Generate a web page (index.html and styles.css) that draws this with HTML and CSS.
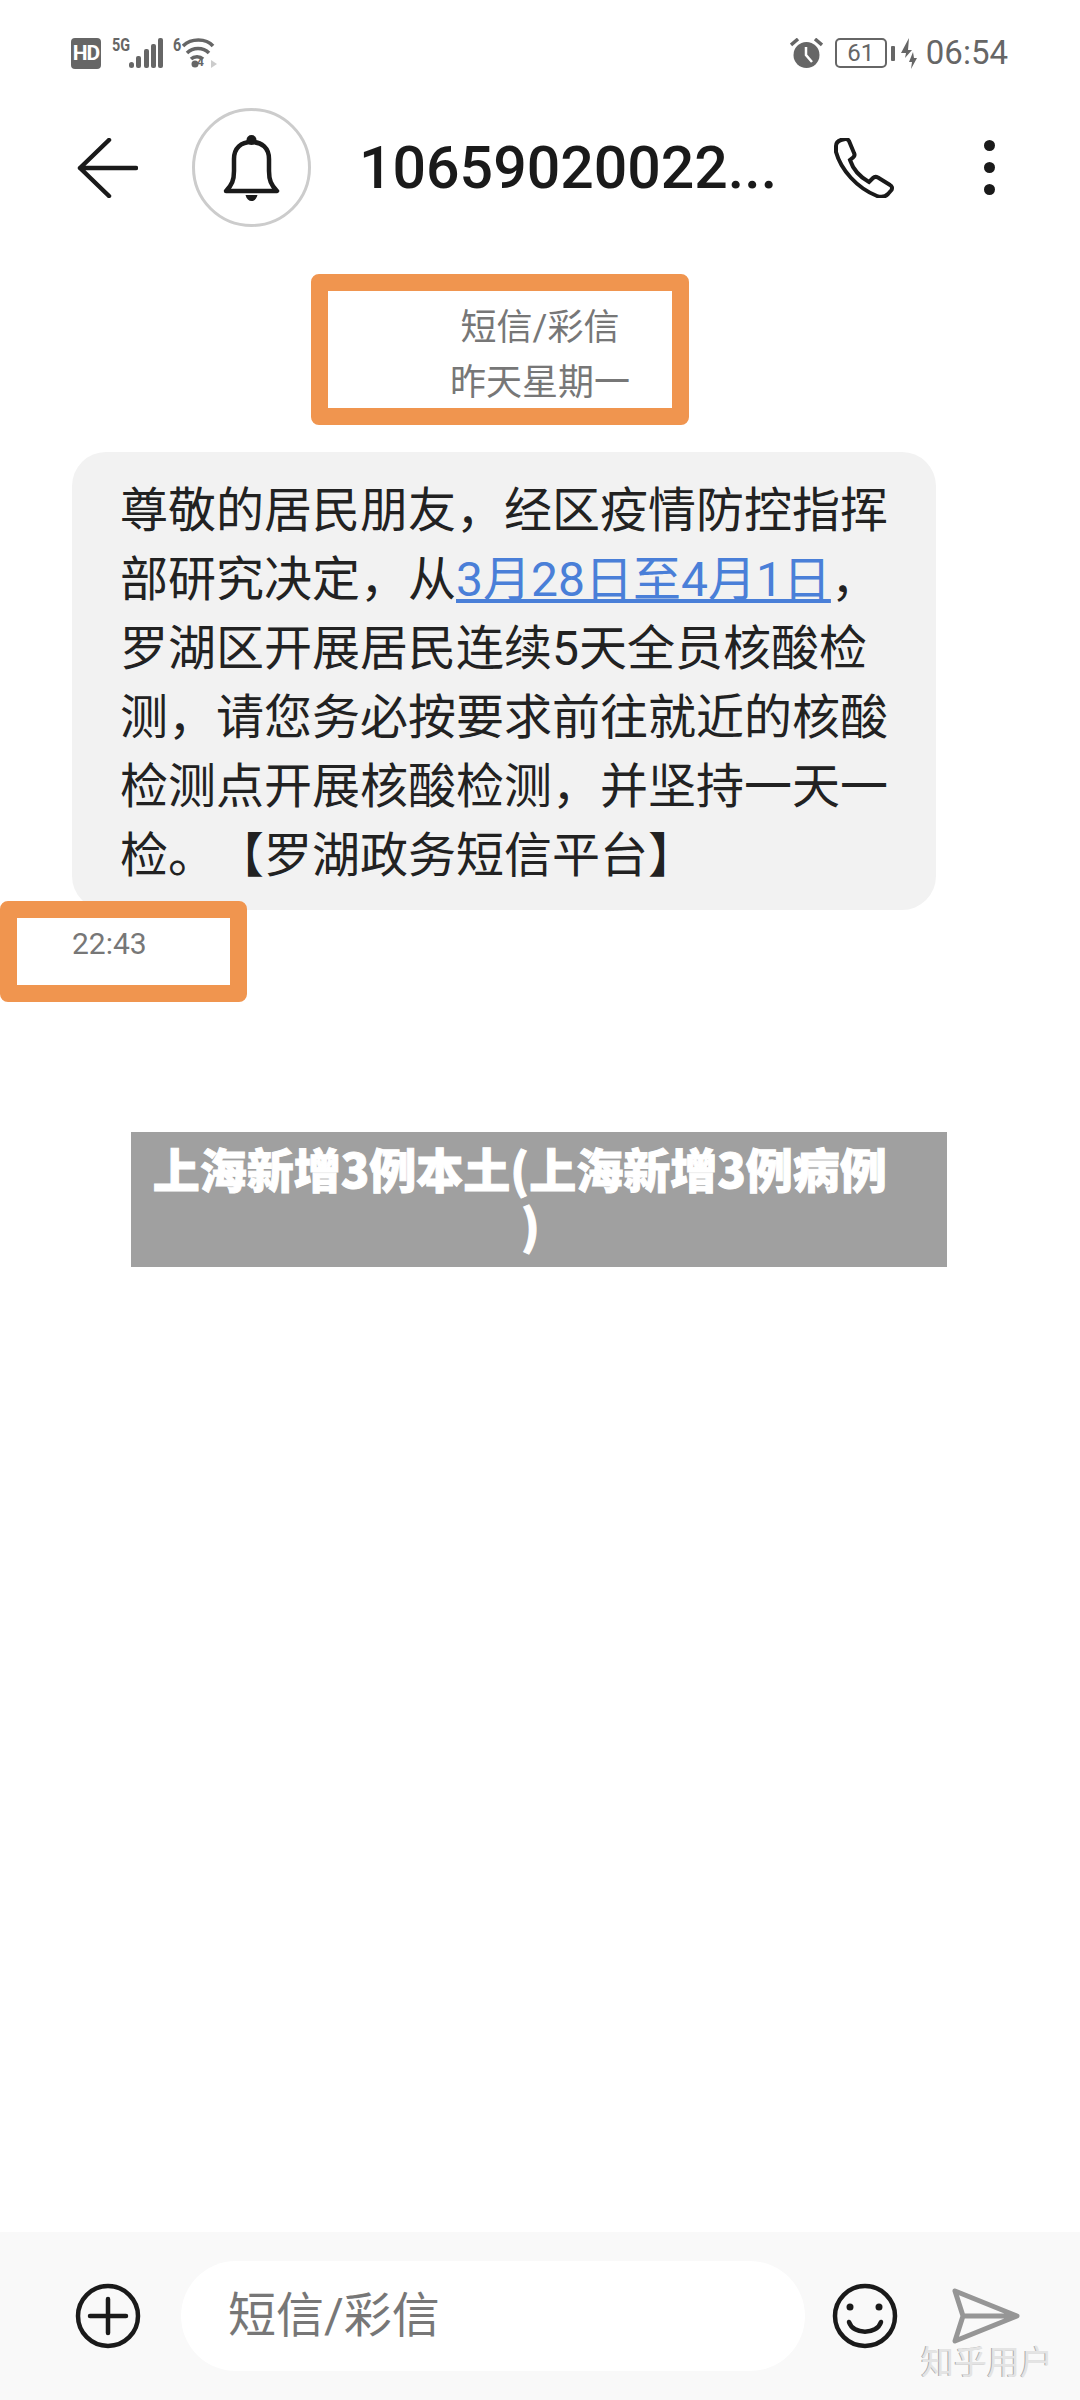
FILE: index.html
```html
<!DOCTYPE html>
<html lang="zh-CN">
<head>
  <meta charset="UTF-8">
  <meta name="viewport" content="width=device-width, initial-scale=1.0">
  <title>短信/彩信</title>
  <link rel="stylesheet" href="styles.css">
</head>
<body>
  <div class="screen">
    <div class="status">
      <div class="status-group">
        <span class="hd">HD</span>
        <span class="net net-5g">5G</span>
        <svg class="signal" width="34" height="30" viewBox="0 0 34 30">
          <rect x="0" y="24" width="5" height="6" rx="2.5"/>
          <rect x="7" y="18" width="5" height="12" rx="2"/>
          <rect x="15" y="11" width="5" height="19" rx="2"/>
          <rect x="22" y="6" width="5" height="24" rx="2"/>
          <rect x="29" y="0" width="5" height="30" rx="2"/>
        </svg>
        <span class="net net-6">6</span>
        <svg class="wifi" width="36" height="30" viewBox="0 0 36 30">
          <path d="M1 8 C9 0 24 0 31 8" />
          <path d="M5 15 C11 9 21 9 27 15" />
          <path d="M9 21 C12 18 18 18 21 21" />
          <circle cx="13" cy="26" r="3.5" class="fill"/>
          <path d="M29 22 L35 26 L29 30 Z" class="arrow"/>
        </svg>
        <span class="wifi-num">4</span>
      </div>
      <div class="status-group">
        <svg class="alarm" width="33" height="30" viewBox="0 0 33 30">
          <circle cx="16.5" cy="17" r="13" fill="#666"/>
          <path d="M16 9 V17 L22 24" fill="none" stroke="#fff" stroke-width="2.5"/>
          <path d="M1 7 L8 1 M32 7 L25 1" fill="none" stroke="#666" stroke-width="3.5"/>
        </svg>
        <div class="battery">61</div>
        <span class="battery-nub"></span>
        <svg class="bolt" width="16" height="31" viewBox="0 0 16 31">
          <path d="M8 0 L0 15 H5 L4 20 L11 12 H7 Z M12 14 L8 24 H11 L10 31 L16 20 H13 Z" fill="#666"/>
        </svg>
        <span class="clock">06:54</span>
      </div>
    </div>

    <div class="header">
      <svg class="back" width="61" height="60" viewBox="0 0 61 60">
        <path d="M32 2 L3 30 L32 58 M3 30 H59"/>
      </svg>
      <div class="avatar">
        <svg width="57" height="66" viewBox="0 0 57 66">
          <path d="M3 56 C9 50 11 45 11 36 V24 C11 13 18 7 28.5 7 C39 7 46 13 46 24 V36 C46 45 48 50 54 56 Z" fill="none" stroke="#1a1a1a" stroke-width="4.5" stroke-linejoin="round"/>
          <circle cx="28.5" cy="5" r="5" fill="#1a1a1a"/>
          <path d="M22.5 60 H34.5 C33.5 64 31 66 28.5 66 C26 66 23.5 64 22.5 60 Z" fill="#1a1a1a"/>
        </svg>
      </div>
      <div class="title">10659020022...</div>
      <svg class="phone" width="62" height="60" viewBox="0 0 62 60">
        <path d="M3 8 C3 5 5 3 8 2 L12 1 C14 .5 15 1.5 16 3 L21 15 C22 17 21.5 18.5 20 19.5 L17 22 C20 31 27 39 36 44 L40 40 C41.5 38.5 43 38.5 45 39.5 L57 47 C59 48 59.5 50 58.5 52 L55 56 C52 59 48 59.5 44 58 C24 50 8 32 3 14 Z"/>
      </svg>
      <div class="more">
        <span></span>
        <span></span>
        <span></span>
      </div>
    </div>

    <div class="thread">
      <div class="note">
        <div>短信/彩信</div>
        <div>昨天星期一</div>
      </div>
      <div class="bubble">
        尊敬的居民朋友，经区疫情防控指挥<br>
        部研究决定，从<a href="#">3月28日至4月1日</a>，<br>
        罗湖区开展居民连续5天全员核酸检<br>
        测，请您务必按要求前往就近的核酸<br>
        检测点开展核酸检测，并坚持一天一<br>
        检。【罗湖政务短信平台】
      </div>
      <div class="time">22:43</div>
      <div class="caption">上海新增3例本土(上海新增3例病例&nbsp;&nbsp;<br>)</div>
    </div>

    <div class="composer">
      <svg width="66" height="66" viewBox="0 0 66 66">
        <circle cx="33" cy="33" r="30" fill="none" stroke="#1a1a1a" stroke-width="4.5"/>
        <path d="M33 16 V50 M15 33 H51" stroke="#1a1a1a" stroke-width="4.5" stroke-linecap="round"/>
      </svg>
      <div class="input">短信/彩信</div>
      <svg width="66" height="66" viewBox="0 0 66 66">
        <circle cx="33" cy="33" r="30" fill="none" stroke="#1a1a1a" stroke-width="4.5"/>
        <circle cx="18" cy="24" r="3.5" fill="#1a1a1a"/>
        <circle cx="47" cy="24" r="3.5" fill="#1a1a1a"/>
        <path d="M17 39 C21 52 45 52 49 39" fill="none" stroke="#1a1a1a" stroke-width="4.5" stroke-linecap="round"/>
      </svg>
      <svg class="send" width="68" height="56" viewBox="0 0 68 56">
        <path d="M3 3 L65 28 L3 53 L11 28 Z M11 28 H65" fill="none" stroke="#969696" stroke-width="5" stroke-linejoin="round"/>
      </svg>
      <div class="watermark">知乎用户</div>
    </div>
  </div>
</body>
</html>
```

FILE: styles.css
```css
* {
  box-sizing: border-box;
}
body {
  margin: 0;
  background: #fff;
  font-family: Roboto, "Noto Sans CJK SC", sans-serif;
}
.screen {
  position: relative;
  display: flex;
  flex-direction: column;
  width: 1080px;
  height: 2400px;
  overflow: hidden;
}

/* status bar */
.status {
  display: flex;
  justify-content: space-between;
  align-items: center;
  height: 30px;
  margin: 38px 72px 40px 71px;
  color: #666;
}
.status-group {
  position: relative;
  display: flex;
  align-items: center;
  height: 30px;
}
.hd {
  width: 30px;
  height: 31px;
  line-height: 31px;
  background: #666;
  border-radius: 4px;
  color: #fff;
  font-size: 21px;
  font-weight: 700;
  text-align: center;
  letter-spacing: -1px;
}
.net {
  align-self: flex-start;
  margin-top: -3px;
  font-size: 18px;
  font-weight: 700;
  line-height: 20px;
  transform: scaleX(.8);
  transform-origin: left;
}
.net-5g {
  width: 22px;
  margin-right: -5px;
  margin-left: 11px;
}
.signal {
  fill: #666;
}
.net-6 {
  width: 11px;
  margin-right: -2px;
  margin-left: 10px;
}
.wifi path {
  fill: none;
  stroke: #666;
  stroke-width: 3.5;
}
.wifi .fill {
  fill: #666;
}
.wifi .arrow {
  fill: #ccc;
  stroke: none;
}
.wifi-num {
  position: absolute;
  right: 14px;
  bottom: -1px;
  font-size: 12px;
  font-weight: 700;
  line-height: 14px;
}
.battery {
  width: 52px;
  height: 30px;
  margin-left: 12px;
  border: 2px solid #666;
  border-radius: 5px;
  font-size: 24px;
  line-height: 26px;
  text-align: center;
}
.battery-nub {
  width: 4px;
  height: 15px;
  margin-left: 4px;
  background: #666;
  border-radius: 1px;
}
.bolt {
  margin-left: 6px;
}
.clock {
  margin-left: 9px;
  font-size: 33px;
  line-height: 40px;
}

/* header */
.header {
  display: flex;
  align-items: center;
  height: 119px;
  padding-left: 77px;
}
.back path {
  fill: none;
  stroke: #1a1a1a;
  stroke-width: 4.5;
  stroke-linecap: round;
  stroke-linejoin: round;
}
.avatar {
  display: flex;
  justify-content: center;
  align-items: center;
  width: 119px;
  height: 119px;
  margin-left: 54px;
  border: 3px solid #ccc;
  border-radius: 50%;
}
.title {
  width: 522px;
  padding-left: 48px;
  color: #1a1a1a;
  font-size: 59px;
  font-weight: 500;
  white-space: nowrap;
}
.phone path {
  fill: none;
  stroke: #1a1a1a;
  stroke-width: 4;
}
.more {
  display: flex;
  flex-direction: column;
  gap: 11px;
  margin-left: 89px;
}
.more span {
  width: 11px;
  height: 11px;
  background: #1a1a1a;
  border-radius: 50%;
}

/* messages */
.thread {
  flex: 1;
  padding-top: 47px;
}
.note {
  width: 378px;
  height: 151px;
  margin-left: 311px;
  padding: 10px 0 0 80px;
  border: 17px solid #f0954f;
  border-radius: 8px;
  color: #777;
  font-size: 36px;
  line-height: 55px;
  text-align: center;
}
.bubble {
  width: 864px;
  height: 458px;
  margin: 27px 0 0 72px;
  padding: 24px 0 0 48px;
  background: #f2f2f2;
  border-radius: 34px;
  color: #222;
  font-size: 48px;
  line-height: 69px;
  text-spacing-trim: space-all;
  white-space: nowrap;
}
.bubble a {
  color: #4a7fd8;
}
.time {
  display: flex;
  align-items: center;
  width: 247px;
  height: 101px;
  margin-top: -9px;
  padding: 0 0 16px 55px;
  background: #fff;
  border: 17px solid #f0954f;
  border-radius: 8px;
  color: #777;
  font-size: 30px;
}
.caption {
  width: 816px;
  height: 135px;
  margin: 130px 0 0 131px;
  padding: 8px 17px 0 0;
  background: #a0a0a0;
  color: #fff;
  font-family: "Noto Sans CJK SC", sans-serif;
  font-size: 47px;
  font-weight: 900;
  line-height: 56px;
  text-align: center;
  -webkit-text-stroke: 1px #fff;
}

/* bottom input */
.composer {
  display: flex;
  align-items: center;
  height: 168px;
  padding-left: 75px;
  background: #f9f9f9;
}
.input {
  width: 624px;
  height: 110px;
  margin: 0 27px 0 40px;
  padding-left: 47px;
  background: #fff;
  border-radius: 55px;
  color: #777;
  font-size: 48px;
  line-height: 110px;
}
.send {
  margin-left: 54px;
}
.watermark {
  position: absolute;
  right: 27px;
  bottom: 16px;
  color: #e4e4e4;
  font-size: 33px;
  text-shadow: -1px 0 0 #aaa;
}
```
